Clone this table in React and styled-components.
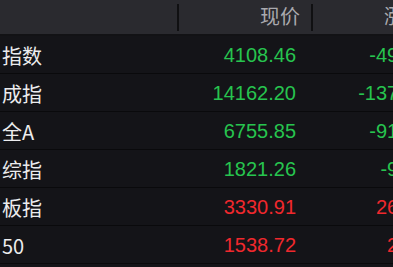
import React from "react";
import styled, { createGlobalStyle } from "styled-components";

const Global = createGlobalStyle`
  html, body { margin: 0; padding: 0; background: #141418; overflow: hidden; }
  body { font-family: "Liberation Sans", "Noto Sans CJK SC", sans-serif; }
`;

const Table = styled.div`
  width: 440px;
  background: #141418;
`;

const Header = styled.div`
  display: flex;
  align-items: center;
  height: 34px;
  background: #2a2a2f;
  border-bottom: 2px solid #121215;
`;

const HeadCell = styled.div`
  width: ${(p) => p.$w}px;
  box-sizing: border-box;
  padding-right: ${(p) => p.$pr || 0}px;
  text-align: right;
  color: #a9a9ae;
  font-size: 20px;
  line-height: 34px;
  white-space: nowrap;
`;

const Divider = styled.div`
  width: 2px;
  height: 27px;
  background: #101012;
`;

const Row = styled.div`
  display: grid;
  grid-template-columns: 179px 134px 121px;
  height: 37px;
  align-items: center;
  border-bottom: 1px solid #0a0a0c;
  font-size: 20px;
  padding-top: 2px;
  box-sizing: border-box;
  height: 38px;
`;

const Name = styled.div`
  padding-left: 2px;
  color: #ececee;
  font-family: "Noto Sans CJK SC", "Liberation Sans", sans-serif;
  white-space: nowrap;
`;

const Num = styled.div`
  text-align: right;
  padding-right: ${(p) => p.$pr}px;
  color: ${(p) => (p.$up ? "#f0282d" : "#27c44f")};
  white-space: nowrap;
`;

const rows = [
  { name: "指数", price: "4108.46", chg: "-49.87", up: false },
  { name: "成指", price: "14162.20", chg: "-137.52", up: false },
  { name: "全A", price: "6755.85", chg: "-91.23", up: false },
  { name: "综指", price: "1821.26", chg: "-9.45", up: false },
  { name: "板指", price: "3330.91", chg: "26.18", up: true },
  { name: "50", price: "1538.72", chg: "2.94", up: true },
];

export default function App() {
  return (
    <>
      <Global />
      <Table>
        <Header>
          <HeadCell $w={177} />
          <Divider />
          <HeadCell $w={132} $pr={11}>现价</HeadCell>
          <Divider />
          <HeadCell $w={122} $pr={11}>涨跌</HeadCell>
        </Header>
        {rows.map((r) => (
          <Row key={r.name}>
            <Name>{r.name}</Name>
            <Num $up={r.up} $pr={17}>{r.price}</Num>
            <Num $up={r.up} $pr={8}>{r.chg}</Num>
          </Row>
        ))}
      </Table>
    </>
  );
}
